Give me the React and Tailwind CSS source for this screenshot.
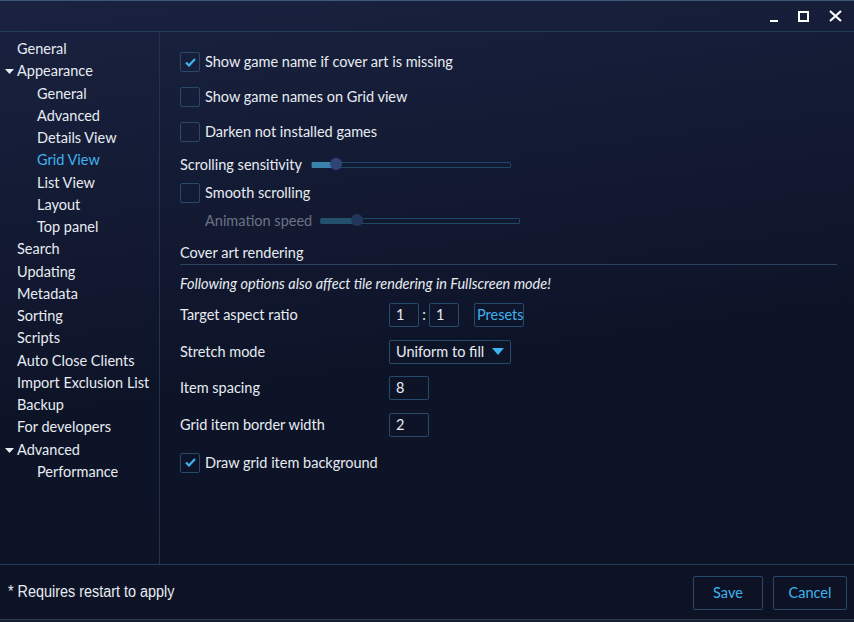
import React from "react";

const font = "font-['Lato','Open_Sans',sans-serif]";

const nav = [
  { label: "General", level: 1 },
  { label: "Appearance", level: 1, open: true },
  { label: "General", level: 2 },
  { label: "Advanced", level: 2 },
  { label: "Details View", level: 2 },
  { label: "Grid View", level: 2, active: true },
  { label: "List View", level: 2 },
  { label: "Layout", level: 2 },
  { label: "Top panel", level: 2 },
  { label: "Search", level: 1 },
  { label: "Updating", level: 1 },
  { label: "Metadata", level: 1 },
  { label: "Sorting", level: 1 },
  { label: "Scripts", level: 1 },
  { label: "Auto Close Clients", level: 1 },
  { label: "Import Exclusion List", level: 1 },
  { label: "Backup", level: 1 },
  { label: "For developers", level: 1 },
  { label: "Advanced", level: 1, open: true },
  { label: "Performance", level: 2 },
];

function Caret() {
  return (
    <svg width="9" height="5" viewBox="0 0 9 5" className="absolute left-[5px] top-[9px]">
      <path d="M0 0 L9 0 L4.5 5 Z" fill="#e8ecf2" />
    </svg>
  );
}

function Check({ checked, label, className = "" }) {
  return (
    <div className={`flex items-center h-[20px] ${className}`}>
      <div className="w-[20px] h-[20px] border border-[#27496a] rounded-[2px] flex items-center justify-center">
        {checked && (
          <svg width="11" height="9" viewBox="0 0 11 9">
            <path d="M1 4.5 L4 7.5 L10 1" stroke="#3fb3ee" strokeWidth="2.2" fill="none" />
          </svg>
        )}
      </div>
      <span className="ml-[5px]">{label}</span>
    </div>
  );
}

function Slider({ fill, thumb, dim }) {
  return (
    <div className="relative w-[200px] h-[6px] border border-[#1d4866] rounded-[1px]">
      <div
        className={`absolute left-0 top-[-1px] h-[6px] ${dim ? "bg-[#24506e]" : "bg-[#3a81ab]"}`}
        style={{ width: fill }}
      />
      <div
        className={`absolute top-[-5px] w-[12px] h-[12px] rounded-full ${dim ? "bg-[#24365c]" : "bg-[#2e4475]"}`}
        style={{ left: thumb }}
      />
    </div>
  );
}

function Box({ w, children, className = "" }) {
  return (
    <div className={`h-[24px] border border-[#27496a] rounded-[2px] flex items-center px-[6px] ${className}`} style={{ width: w }}>
      {children}
    </div>
  );
}

export default function App() {
  return (
    <div className={`w-[854px] h-[622px] flex flex-col text-[14.5px] text-[#e8ecf2] ${font} bg-[linear-gradient(172deg,#1a2240_0%,#131a33_30%,#0e1428_55%,#0d1224_100%)] border-t border-[#3a5878] overflow-hidden`}>
      {/* title bar */}
      <div className="h-[31px] flex items-center justify-end border-b border-[#203c58] shrink-0">
        <div className="flex items-center mr-[12px] gap-[20px]">
          <div className="w-[8px] h-[2px] bg-white mt-[10px]" />
          <div className="w-[11px] h-[11px] border-[2px] border-white" />
          <svg width="13" height="12" viewBox="0 0 13 12">
            <path d="M1 1 L12 11 M12 1 L1 11" stroke="white" strokeWidth="2.2" />
          </svg>
        </div>
      </div>

      {/* body */}
      <div className="flex flex-1 min-h-0">
        <div className="w-[160px] shrink-0 border-r border-[#1e3550] pt-[6px]">
          {nav.map((n, i) => (
            <div
              key={i}
              className={`relative h-[22.25px] leading-[22px] ${n.level === 2 ? "pl-[37px]" : "pl-[17px]"} ${n.active ? "text-[#3fb3ee]" : ""}`}
            >
              {n.open && <Caret />}
              {n.label}
            </div>
          ))}
        </div>

        <div className="flex-1 pl-[20px] pr-[17px] pt-[20px]">
          <Check checked label="Show game name if cover art is missing" />
          <Check label="Show game names on Grid view" className="mt-[15px]" />
          <Check label="Darken not installed games" className="mt-[15px]" />
          <div className="flex items-center mt-[13px] h-[20px]">
            <span>Scrolling sensitivity</span>
            <div className="ml-[9px]">
              <Slider fill="24px" thumb="18px" />
            </div>
          </div>
          <Check label="Smooth scrolling" className="mt-[8px]" />
          <div className="flex items-center mt-[8px] h-[20px] pl-[25px] text-[#6b7384]">
            <span>Animation speed</span>
            <div className="ml-[8px]">
              <Slider fill="32px" thumb="30px" dim />
            </div>
          </div>
          <div className="mt-[12px] pb-[2px] border-b border-[#29445e] h-[22px] leading-[20px]">Cover art rendering</div>
          <div className="mt-[9px] italic h-[20px] leading-[20px]">Following options also affect tile rendering in Fullscreen mode!</div>

          <div className="grid grid-cols-[209px_1fr] gap-y-[12.5px] mt-[9px] items-center">
            <span>Target aspect ratio</span>
            <div className="flex items-center">
              <Box w="30px">1</Box>
              <span className="w-[10px] text-center">:</span>
              <Box w="30px">1</Box>
              <Box w="50px" className="ml-[15px] !px-[2px] text-[#3fb3ee]">Presets</Box>
            </div>
            <span>Stretch mode</span>
            <div>
              <Box w="122px" className="justify-between">
                <span>Uniform to fill</span>
                <svg width="12" height="7" viewBox="0 0 12 7">
                  <path d="M0 0 L12 0 L6 7 Z" fill="#3fb3ee" />
                </svg>
              </Box>
            </div>
            <span>Item spacing</span>
            <div><Box w="40px">8</Box></div>
            <span>Grid item border width</span>
            <div><Box w="40px">2</Box></div>
          </div>
          <Check checked label="Draw grid item background" className="mt-[16px]" />
        </div>
      </div>

      {/* footer */}
      <div className="h-[55px] shrink-0 border-t border-[#203c58] flex items-center justify-between pl-[8px] pr-[7px]">
        <span className="font-['Liberation_Sans',sans-serif] text-[16px] origin-left scale-x-[0.9] inline-block">* Requires restart to apply</span>
        <div className="flex gap-[10px] mt-[1px]">
          <button className="w-[70px] h-[34px] border border-[#27496a] text-[#3fb3ee] rounded-[2px]">Save</button>
          <button className="w-[74px] h-[34px] border border-[#27496a] text-[#3fb3ee] rounded-[2px]">Cancel</button>
        </div>
      </div>
      <div className="h-[3px] shrink-0 bg-[#1a2030] border-t border-[#2a3f55]" />
    </div>
  );
}
